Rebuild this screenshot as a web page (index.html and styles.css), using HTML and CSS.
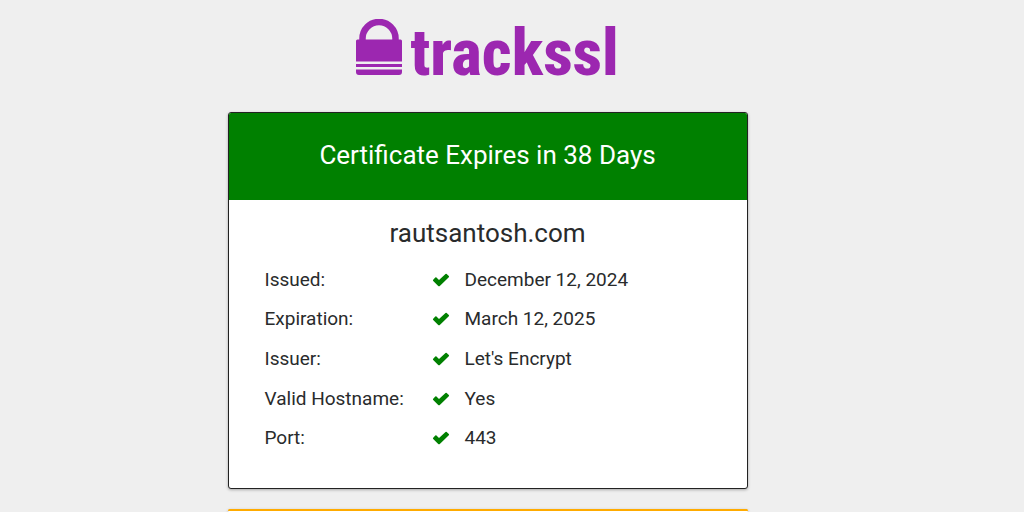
FILE: index.html
```
<!DOCTYPE html>
<html lang="en">
<head>
    <meta charset="UTF-8">
    <meta name="viewport" content="width=device-width, initial-scale=1.0">
    <title>TrackSSL - rautsantosh.com</title>
    <link rel="stylesheet" href="styles.css">
</head>
<body>
    <!-- Check mark shared by all rows -->
    <svg class="sprite" aria-hidden="true">
        <symbol id="check" viewBox="0 0 18 14">
            <path d="M1.2 6.7 3.3 4.6Q3.9 4 4.5 4.6L7 7.1 13.5 1Q14.1.4 14.7 1L16.8 3.1Q17.4 3.7 16.8 4.3L7.8 13Q7 13.6 6.2 12.9L1.2 7.9Q.6 7.3 1.2 6.7Z"/>
        </symbol>
    </svg>

    <header class="header">
        <svg class="lock" viewBox="0 0 46 56" aria-hidden="true">
            <path d="M6.500 23V19.500a16.500 16.500 0 0 1 33 0V23" fill="none" stroke="currentColor" stroke-width="6.500"/>
            <path d="M1.500 20.500H44.500a1.500 1.500 0 0 1 1.500 1.500V42.500H0V22a1.500 1.500 0 0 1 1.500-1.500ZM0 45H46V48H0ZM0 50.500H46V53a3 3 0 0 1-3 3H3a3 3 0 0 1-3-3Z"/>
        </svg>
        <span class="brand">trackssl</span>
    </header>

    <main class="container">
        <section class="card">
            <h1 class="card-title">Certificate Expires in 38 Days</h1>
            <div class="card-body">
                <h2 class="domain">rautsantosh.com</h2>
                <table class="details">
                    <tr>
                        <th scope="row">Issued:</th>
                        <td class="status"><svg class="check"><use href="#check"/></svg></td>
                        <td>December 12, 2024</td>
                    </tr>
                    <tr>
                        <th scope="row">Expiration:</th>
                        <td class="status"><svg class="check"><use href="#check"/></svg></td>
                        <td>March 12, 2025</td>
                    </tr>
                    <tr>
                        <th scope="row">Issuer:</th>
                        <td class="status"><svg class="check"><use href="#check"/></svg></td>
                        <td>Let's Encrypt</td>
                    </tr>
                    <tr>
                        <th scope="row">Valid Hostname:</th>
                        <td class="status"><svg class="check"><use href="#check"/></svg></td>
                        <td>Yes</td>
                    </tr>
                    <tr>
                        <th scope="row">Port:</th>
                        <td class="status"><svg class="check"><use href="#check"/></svg></td>
                        <td>443</td>
                    </tr>
                </table>
            </div>
        </section>

        <section class="card notice"></section>
    </main>
</body>
</html>
```
FILE: styles.css
```
:root {
    --brand: #9c27b0;
    --ok: green;
    --warn: #ffab00;
    --text: #292b2c;
}

* {
    box-sizing: border-box;
}

body {
    font-family: Roboto, "Liberation Sans", sans-serif;
    font-size: 19px;
    line-height: 24px;
    background: #efefef;
    color: var(--text);
    margin: 0;
    padding: 19px 49px 0 0;
}

.sprite {
    display: none;
}

.header {
    display: flex;
    justify-content: center;
    align-items: flex-end;
    gap: 8px;
    height: 56px;
    color: var(--brand);
}

.lock {
    width: 46px;
    height: 56px;
    fill: currentColor;
}

.brand {
    font-family: "Roboto Condensed", Roboto, sans-serif;
    font-size: 65px;
    font-weight: 800;
    line-height: 44px;
}

.container {
    width: 100%;
    max-width: 520px;
    margin: 37px auto 0;
}

.card {
    background: white;
    border: 1px solid #222;
    border-radius: 3px;
    box-shadow: 0 1px 3px rgba(0, 0, 0, 0.3);
    margin-bottom: 20px;
    overflow: hidden;
}

.card-title {
    background: var(--ok);
    color: white;
    font-size: 26px;
    font-weight: 400;
    line-height: 32px;
    text-align: center;
    margin: 0;
    padding: 26px 36px 29px;
}

.card-body {
    padding: 17px 36px 30px;
}

.domain {
    font-size: 26px;
    font-weight: 400;
    line-height: 32px;
    text-align: center;
    margin: 0 0 11px;
}

.details {
    width: 100%;
    height: 198px;
    border-collapse: collapse;
    table-layout: fixed;
}

.details th,
.details td {
    padding: 0;
    font-weight: 400;
    text-align: left;
    vertical-align: middle;
}

.details th {
    width: 167px;
}

.details .status {
    width: 33px;
}

.check {
    display: block;
    width: 18px;
    height: 14px;
    fill: var(--ok);
}

.notice {
    height: 3px;
    margin-bottom: 0;
    border: 0;
    border-top: 2px solid var(--warn);
}
```
